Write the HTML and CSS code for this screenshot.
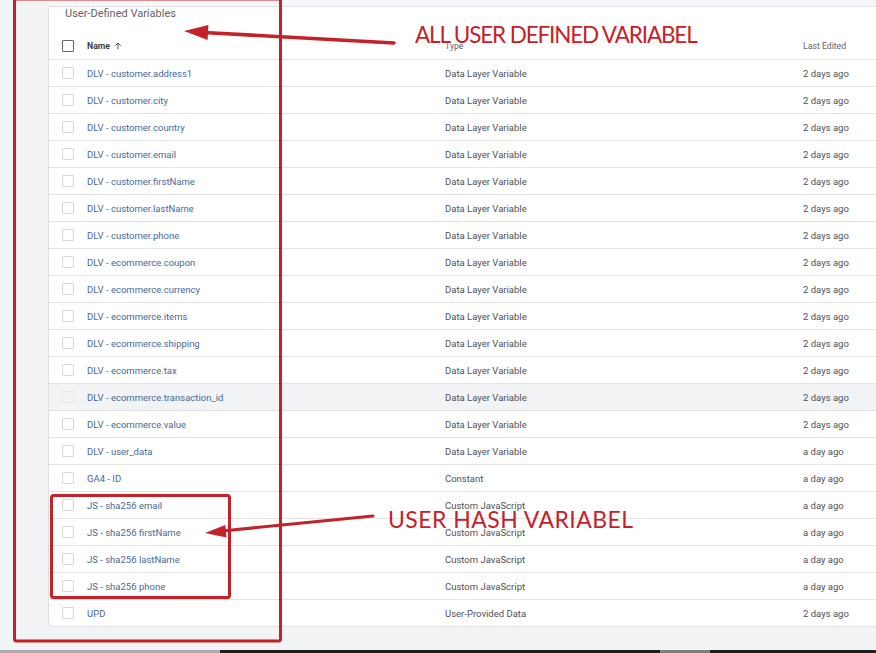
FILE: index.html
```html
<!DOCTYPE html>
<html lang="en">
<head>
<meta charset="utf-8">
<title>User-Defined Variables</title>
<link rel="stylesheet" href="styles.css">
</head>
<body>
<div class="screen">
  <div class="main">
    <div class="strip"></div>
    <div class="card">
      <div class="card-title">User-Defined Variables</div>
      <div class="row head">
        <div class="c-check"><span class="box dark"></span></div>
        <div class="c-name">Name
          <svg class="sort" viewBox="0 0 24 24" width="10" height="10"><path d="M12 20V5M5.5 11.5 12 5l6.5 6.5" fill="none" stroke="#3c4043" stroke-width="2.2"/></svg>
        </div>
        <div class="c-type">Type</div>
        <div class="c-date">Last Edited</div>
      </div>
      <div class="row"><div class="c-check"><span class="box"></span></div><div class="c-name link">DLV - customer.address1</div><div class="c-type">Data Layer Variable</div><div class="c-date">2 days ago</div></div>
      <div class="row"><div class="c-check"><span class="box"></span></div><div class="c-name link">DLV - customer.city</div><div class="c-type">Data Layer Variable</div><div class="c-date">2 days ago</div></div>
      <div class="row"><div class="c-check"><span class="box"></span></div><div class="c-name link">DLV - customer.country</div><div class="c-type">Data Layer Variable</div><div class="c-date">2 days ago</div></div>
      <div class="row"><div class="c-check"><span class="box"></span></div><div class="c-name link">DLV - customer.email</div><div class="c-type">Data Layer Variable</div><div class="c-date">2 days ago</div></div>
      <div class="row"><div class="c-check"><span class="box"></span></div><div class="c-name link">DLV - customer.firstName</div><div class="c-type">Data Layer Variable</div><div class="c-date">2 days ago</div></div>
      <div class="row"><div class="c-check"><span class="box"></span></div><div class="c-name link">DLV - customer.lastName</div><div class="c-type">Data Layer Variable</div><div class="c-date">2 days ago</div></div>
      <div class="row"><div class="c-check"><span class="box"></span></div><div class="c-name link">DLV - customer.phone</div><div class="c-type">Data Layer Variable</div><div class="c-date">2 days ago</div></div>
      <div class="row"><div class="c-check"><span class="box"></span></div><div class="c-name link">DLV - ecommerce.coupon</div><div class="c-type">Data Layer Variable</div><div class="c-date">2 days ago</div></div>
      <div class="row"><div class="c-check"><span class="box"></span></div><div class="c-name link">DLV - ecommerce.currency</div><div class="c-type">Data Layer Variable</div><div class="c-date">2 days ago</div></div>
      <div class="row"><div class="c-check"><span class="box"></span></div><div class="c-name link">DLV - ecommerce.items</div><div class="c-type">Data Layer Variable</div><div class="c-date">2 days ago</div></div>
      <div class="row"><div class="c-check"><span class="box"></span></div><div class="c-name link">DLV - ecommerce.shipping</div><div class="c-type">Data Layer Variable</div><div class="c-date">2 days ago</div></div>
      <div class="row"><div class="c-check"><span class="box"></span></div><div class="c-name link">DLV - ecommerce.tax</div><div class="c-type">Data Layer Variable</div><div class="c-date">2 days ago</div></div>
      <div class="row hover"><div class="c-check"><span class="box faint"></span></div><div class="c-name link">DLV - ecommerce.transaction_id</div><div class="c-type">Data Layer Variable</div><div class="c-date">2 days ago</div></div>
      <div class="row"><div class="c-check"><span class="box"></span></div><div class="c-name link">DLV - ecommerce.value</div><div class="c-type">Data Layer Variable</div><div class="c-date">2 days ago</div></div>
      <div class="row"><div class="c-check"><span class="box"></span></div><div class="c-name link">DLV - user_data</div><div class="c-type">Data Layer Variable</div><div class="c-date">a day ago</div></div>
      <div class="row"><div class="c-check"><span class="box"></span></div><div class="c-name link">GA4 - ID</div><div class="c-type">Constant</div><div class="c-date">a day ago</div></div>
      <div class="row"><div class="c-check"><span class="box"></span></div><div class="c-name link">JS - sha256 email</div><div class="c-type">Custom JavaScript</div><div class="c-date">a day ago</div></div>
      <div class="row"><div class="c-check"><span class="box"></span></div><div class="c-name link">JS - sha256 firstName</div><div class="c-type">Custom JavaScript</div><div class="c-date">a day ago</div></div>
      <div class="row"><div class="c-check"><span class="box"></span></div><div class="c-name link">JS - sha256 lastName</div><div class="c-type">Custom JavaScript</div><div class="c-date">a day ago</div></div>
      <div class="row"><div class="c-check"><span class="box"></span></div><div class="c-name link">JS - sha256 phone</div><div class="c-type">Custom JavaScript</div><div class="c-date">a day ago</div></div>
      <div class="row last"><div class="c-check"><span class="box"></span></div><div class="c-name link">UPD</div><div class="c-type">User-Provided Data</div><div class="c-date">2 days ago</div></div>
    </div>
  </div>
  <div class="taskbar">
    <span class="seg light"></span><span class="seg dark"></span><span class="seg mid"></span><span class="seg dark grow"></span>
  </div>

  <svg class="marks" viewBox="0 0 876 653" width="876" height="653">
    <rect x="14.5" y="-1" width="266" height="642" rx="2" fill="none" stroke="#c4222a" stroke-width="3"/>
    <rect x="51.5" y="495.5" width="178" height="102" rx="2" fill="none" stroke="#c4222a" stroke-width="3"/>
    <line x1="394" y1="43" x2="204" y2="32.5" stroke="#c4222a" stroke-width="3.5" stroke-linecap="round"/>
    <polygon points="184,31 208.4,25 207.6,40" fill="#c4222a"/>
    <line x1="373" y1="516" x2="222" y2="531" stroke="#c4222a" stroke-width="3" stroke-linecap="round"/>
    <polygon points="205,533 226.5,537.5 225.3,525" fill="#c4222a"/>
  </svg>
  <div class="note note-all">ALL USER DEFINED VARIABEL</div>
  <div class="note note-hash">USER HASH VARIABEL</div>
</div>
</body>
</html>
```

FILE: styles.css
```css
* { box-sizing: border-box; }
html, body {
  margin: 0;
  padding: 0;
  width: 876px;
  height: 653px;
  overflow: hidden;
  background: #f1f3f4;
  font-family: Roboto, "Liberation Sans", Arial, sans-serif;
}
.screen {
  position: relative;
  width: 876px;
  height: 653px;
  display: flex;
  flex-direction: column;
}
.main {
  flex: 1;
  margin-left: 48px;
  width: 860px;
}
.strip {
  height: 6px;
  background: #f5f7f9;
}
.card {
  background: #fff;
  border: 1px solid #dfe1e5;
  border-right: none;
  border-radius: 0 0 0 6px;
}
.card-title {
  height: 26px;
  line-height: 14px;
  padding-left: 16px;
  font-size: 11px;
  color: #5f6368;
}
.row {
  display: grid;
  grid-template-columns: 38px 358px 358px 1fr;
  align-items: center;
  height: 27px;
  border-bottom: 1px solid #e3e3e3;
  font-size: 9.5px;
  color: #4d5156;
}
.row.last { border-bottom: none; height: 26px; }
.row.hover { background: #f1f3f4; }
.row.head {
  color: #5f6368;
  font-size: 8.7px;
}
.row.head .c-name {
  font-weight: 700;
  color: #3c4043;
  display: flex;
  align-items: center;
  gap: 3px;
}
.c-check {
  padding-left: 13px;
  display: flex;
  align-items: center;
}
.box {
  width: 12px;
  height: 12px;
  border: 1px solid #d6d8db;
  border-radius: 1px;
  background: #fff;
}
.box.dark {
  border: 1.5px solid #5f6368;
}
.box.faint {
  border-color: #e6e7e9;
  background: #f1f3f4;
}
.link { color: #46699c; }
.sort { display: block; }
.taskbar {
  height: 3px;
  display: flex;
}
.seg { height: 3px; display: block; }
.seg.light { width: 220px; background: #a9abae; }
.seg.dark { width: 440px; background: #1f2022; }
.seg.mid { width: 50px; background: #7d7f82; }
.seg.grow { flex: 1; width: auto; }
.marks {
  position: absolute;
  left: 0;
  top: 0;
  pointer-events: none;
}
.note {
  position: absolute;
  font-family: Lato, "Open Sans", sans-serif;
  line-height: 1;
  color: #c4222a;
  white-space: nowrap;
}
.note-all { left: 415px; top: 24px; font-size: 22.5px; letter-spacing: -1.15px; }
.note-hash { left: 388px; top: 508px; font-size: 23px; letter-spacing: 0.45px; }
```
